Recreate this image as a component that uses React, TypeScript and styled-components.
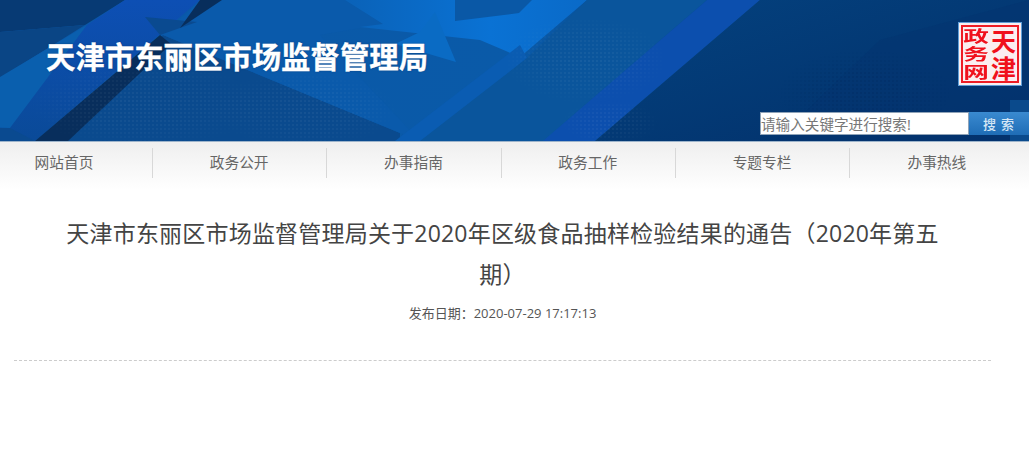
import React from 'react';
import styled, { createGlobalStyle } from 'styled-components';

const navItems = ['网站首页', '政务公开', '办事指南', '政务工作', '专题专栏', '办事热线'];

const GlobalStyle = createGlobalStyle`
  html, body {
    margin: 0;
    padding: 0;
    background: #fff;
    overflow: hidden;
  }
  * {
    box-sizing: border-box;
  }
  body {
    font-family: "Open Sans", "Noto Sans CJK SC", sans-serif;
  }
`;

const Banner = styled.header`
  position: relative;
  height: 142px;
  border-bottom: 1px solid #9db4cb;
  background: #05478a;
  overflow: hidden;
`;

const BannerArt = styled.svg`
  position: absolute;
  inset: 0;
  width: 100%;
  height: 100%;
`;

const BannerInner = styled.div`
  position: relative;
  height: 100%;
  display: flex;
  flex-direction: column;
`;

const TopRow = styled.div`
  display: flex;
  justify-content: space-between;
  align-items: flex-start;
  padding: 22px 7px 0 46px;
  height: 112px;
`;

const SiteTitle = styled.h1`
  margin: 13px 0 0;
  color: #fff;
  font-size: 29.4px;
  line-height: 44px;
  font-weight: 700;
  -webkit-text-stroke: 0.3px #fff;
  text-shadow: 0 0 2px rgba(8, 40, 90, 0.6);
`;

const Seal = styled.div`
  width: 64px;
  height: 64px;
  padding: 2px;
  background: #fbeef0;
  border: 1px solid #5f9fd8;
  display: flex;
`;

const SealInner = styled.div`
  flex: 1;
  display: flex;
  flex-direction: row-reverse;
  border: 2px solid #ee1c25;
`;

const SealColumn = styled.div`
  flex: 1;
  display: flex;
  flex-direction: column;
  justify-content: space-around;
  align-items: center;
  color: #f0101c;
  font-weight: 700;
`;

const SealBigChar = styled.span`
  font-size: 25px;
  line-height: 26px;
`;

const SealWideChar = styled.span`
  font-size: 16px;
  line-height: 17px;
  transform: scaleX(1.6);
`;

const SearchRow = styled.form`
  display: flex;
  justify-content: flex-end;
  height: 23px;
  margin: 0;
`;

const SearchInput = styled.input`
  width: 209px;
  height: 23px;
  padding: 0;
  border: 1px solid #8fa3b8;
  background: #fff;
  font-family: inherit;
  font-size: 14.6px;
  color: #666;
  outline: none;

  &::placeholder {
    color: #777;
    opacity: 1;
  }
`;

const SearchButton = styled.button`
  width: 60px;
  height: 23px;
  border: none;
  padding: 0 0 0 4px;
  background: linear-gradient(#3a8ad0, #1f6db6);
  color: #d5e6f5;
  font-family: inherit;
  font-size: 13px;
  font-weight: 500;
  letter-spacing: 5px;
`;

const Nav = styled.nav`
  display: flex;
  height: 48px;
  padding-top: 6px;
  background: linear-gradient(#efefef, #ffffff);
  align-items: flex-start;
`;

const NavItem = styled.a<{ $first?: boolean }>`
  flex: none;
  width: ${props => (props.$first ? '153px' : '174.3px')};
  height: 30px;
  padding-right: ${props => (props.$first ? '24px' : '1px')};
  border-right: 1px solid #d8d8d8;
  color: #666;
  font-size: 14.7px;
  line-height: 28px;
  text-align: center;

  &:last-child {
    border-right: none;
  }
`;

const Article = styled.main`
  width: 977px;
  margin-left: 14px;
  height: 171px;
  padding-top: 23px;
  border-bottom: 1px dashed #ccc;
`;

const ArticleTitle = styled.h2`
  margin: 0;
  padding: 0 48px;
  color: #444;
  font-size: 23px;
  letter-spacing: 0.2px;
  line-height: 41px;
  font-weight: 400;
  text-align: center;
`;

const PublishDate = styled.p`
  margin: 8px 0 0;
  color: #555;
  font-size: 13px;
  line-height: 20px;
  text-align: center;
`;

const BannerBackground = () => (
  <BannerArt viewBox="0 0 1029 141" preserveAspectRatio="none">
    <defs>
      <linearGradient id="base" x1="0" x2="1" y1="0" y2="0">
        <stop offset="0" stopColor="#0a58a8" />
        <stop offset="0.5" stopColor="#0a5aa8" />
        <stop offset="0.72" stopColor="#05478c" />
        <stop offset="1" stopColor="#033a78" />
      </linearGradient>
      <linearGradient id="band" x1="0" x2="0" y1="0" y2="1">
        <stop offset="0" stopColor="#0d4fb4" />
        <stop offset="1" stopColor="#0a4a98" />
      </linearGradient>
      <linearGradient id="bright" x1="0" x2="1" y1="0" y2="0">
        <stop offset="0" stopColor="#0a62b8" />
        <stop offset="0.6" stopColor="#0a72d4" />
        <stop offset="1" stopColor="#0a6ac8" />
      </linearGradient>
      <linearGradient id="navyCorner" x1="0" x2="1" y1="0" y2="1">
        <stop offset="0" stopColor="#04427f" />
        <stop offset="1" stopColor="#02306a" />
      </linearGradient>
      <radialGradient id="fade">
        <stop offset="0" stopColor="#fff" stopOpacity="1" />
        <stop offset="0.6" stopColor="#fff" stopOpacity="0.7" />
        <stop offset="1" stopColor="#fff" stopOpacity="0" />
      </radialGradient>
      <mask id="fadeMask" maskContentUnits="objectBoundingBox">
        <rect width="1" height="1" fill="url(#fade)" />
      </mask>
      <pattern id="dots" width="4" height="4" patternUnits="userSpaceOnUse">
        <rect width="2" height="2" fill="#ffffff" opacity="0.05" />
      </pattern>
      <pattern id="darkDots" width="4" height="4" patternUnits="userSpaceOnUse">
        <rect width="2" height="2" fill="#001a40" opacity="0.12" />
      </pattern>
    </defs>

    <rect width="1029" height="141" fill="url(#base)" />
    {/* top left corner */}
    <polygon points="0,0 125,0 85,25 0,32" fill="#073a74" />
    <polygon points="0,32 85,25 0,78" fill="#0a4585" />
    <polygon points="87,25 0,77 0,127 10,128" fill="#0a5fae" />
    <polygon points="125,0 200,0 35,141 0,141 0,128 10,128 87,25" fill="url(#band)" />
    <polygon points="0,128 10,128 35,141 0,141" fill="#0a4a90" />

    {/* center facets */}
    <polygon points="163,35 400,133 400,141 67,141" fill="#0a4a8e" />
    <polygon points="200,0 345,0 383,24 320,35 420,141 400,133 163,35" fill="#0a5aab" />
    <polygon points="345,0 587,0 520,57 480,40 360,27 383,24" fill="url(#bright)" />
    <polygon points="435,12 456,62 395,44 420,32" fill="#0a6bc4" />
    <polygon points="455,0 532,0 519,13 455,21" fill="#0a58a6" />
    <polygon points="520,45 527,58 430,141 395,141" fill="#0a5cb2" />
    <polygon points="420,141 527,58 587,0 707,0 543,141" fill="#0a559c" />
    <polygon points="145,17 197,22 160,35" fill="#0a4a90" />

    {/* long stripe on the right */}
    <polygon points="707,0 760,0 595,141 543,141" fill="#0c4fae" />
    <polygon points="760,0 1029,0 1029,141 595,141" fill="url(#navyCorner)" />
    <polygon points="880,40 1029,0 1029,141 775,141" fill="#03346f" opacity="0.5" />
    <rect x="1010" y="100" width="19" height="41" fill="#0a4a8c" />

    {/* dark stripe */}
    <polygon points="200,0 222,0 180,28" fill="#082e5c" />
    <polygon points="160,35 171,44 68,141 35,141" fill="#082e5c" />

    {/* halftone dots */}
    <g mask="url(#fadeMask)">
      <rect x="25" y="60" width="240" height="90" fill="url(#dots)" />
    </g>
    <g mask="url(#fadeMask)">
      <rect x="210" y="70" width="190" height="80" fill="url(#dots)" />
    </g>
    <g mask="url(#fadeMask)">
      <rect x="500" y="15" width="170" height="90" fill="url(#dots)" />
    </g>
    <g mask="url(#fadeMask)">
      <rect x="560" y="100" width="100" height="45" fill="url(#dots)" />
    </g>
    <g mask="url(#fadeMask)">
      <rect x="780" y="50" width="170" height="85" fill="url(#darkDots)" />
    </g>
  </BannerArt>
);

const App: React.FC = () => (
  <>
    <GlobalStyle />
    <Banner>
      <BannerBackground />
      <BannerInner>
        <TopRow>
          <SiteTitle>天津市东丽区市场监督管理局</SiteTitle>
          <Seal>
            <SealInner>
              <SealColumn>
                <SealBigChar>天</SealBigChar>
                <SealBigChar>津</SealBigChar>
              </SealColumn>
              <SealColumn>
                <SealWideChar>政</SealWideChar>
                <SealWideChar>务</SealWideChar>
                <SealWideChar>网</SealWideChar>
              </SealColumn>
            </SealInner>
          </Seal>
        </TopRow>
        <SearchRow onSubmit={e => e.preventDefault()}>
          <SearchInput placeholder="请输入关键字进行搜索!" />
          <SearchButton type="submit">搜索</SearchButton>
        </SearchRow>
      </BannerInner>
    </Banner>
    <Nav>
      {navItems.map((item, index) => (
        <NavItem key={item} $first={index === 0}>
          {item}
        </NavItem>
      ))}
    </Nav>
    <Article>
      <ArticleTitle>天津市东丽区市场监督管理局关于2020年区级食品抽样检验结果的通告（2020年第五期）</ArticleTitle>
      <PublishDate>发布日期：2020-07-29 17:17:13</PublishDate>
    </Article>
  </>
);

export default App;
